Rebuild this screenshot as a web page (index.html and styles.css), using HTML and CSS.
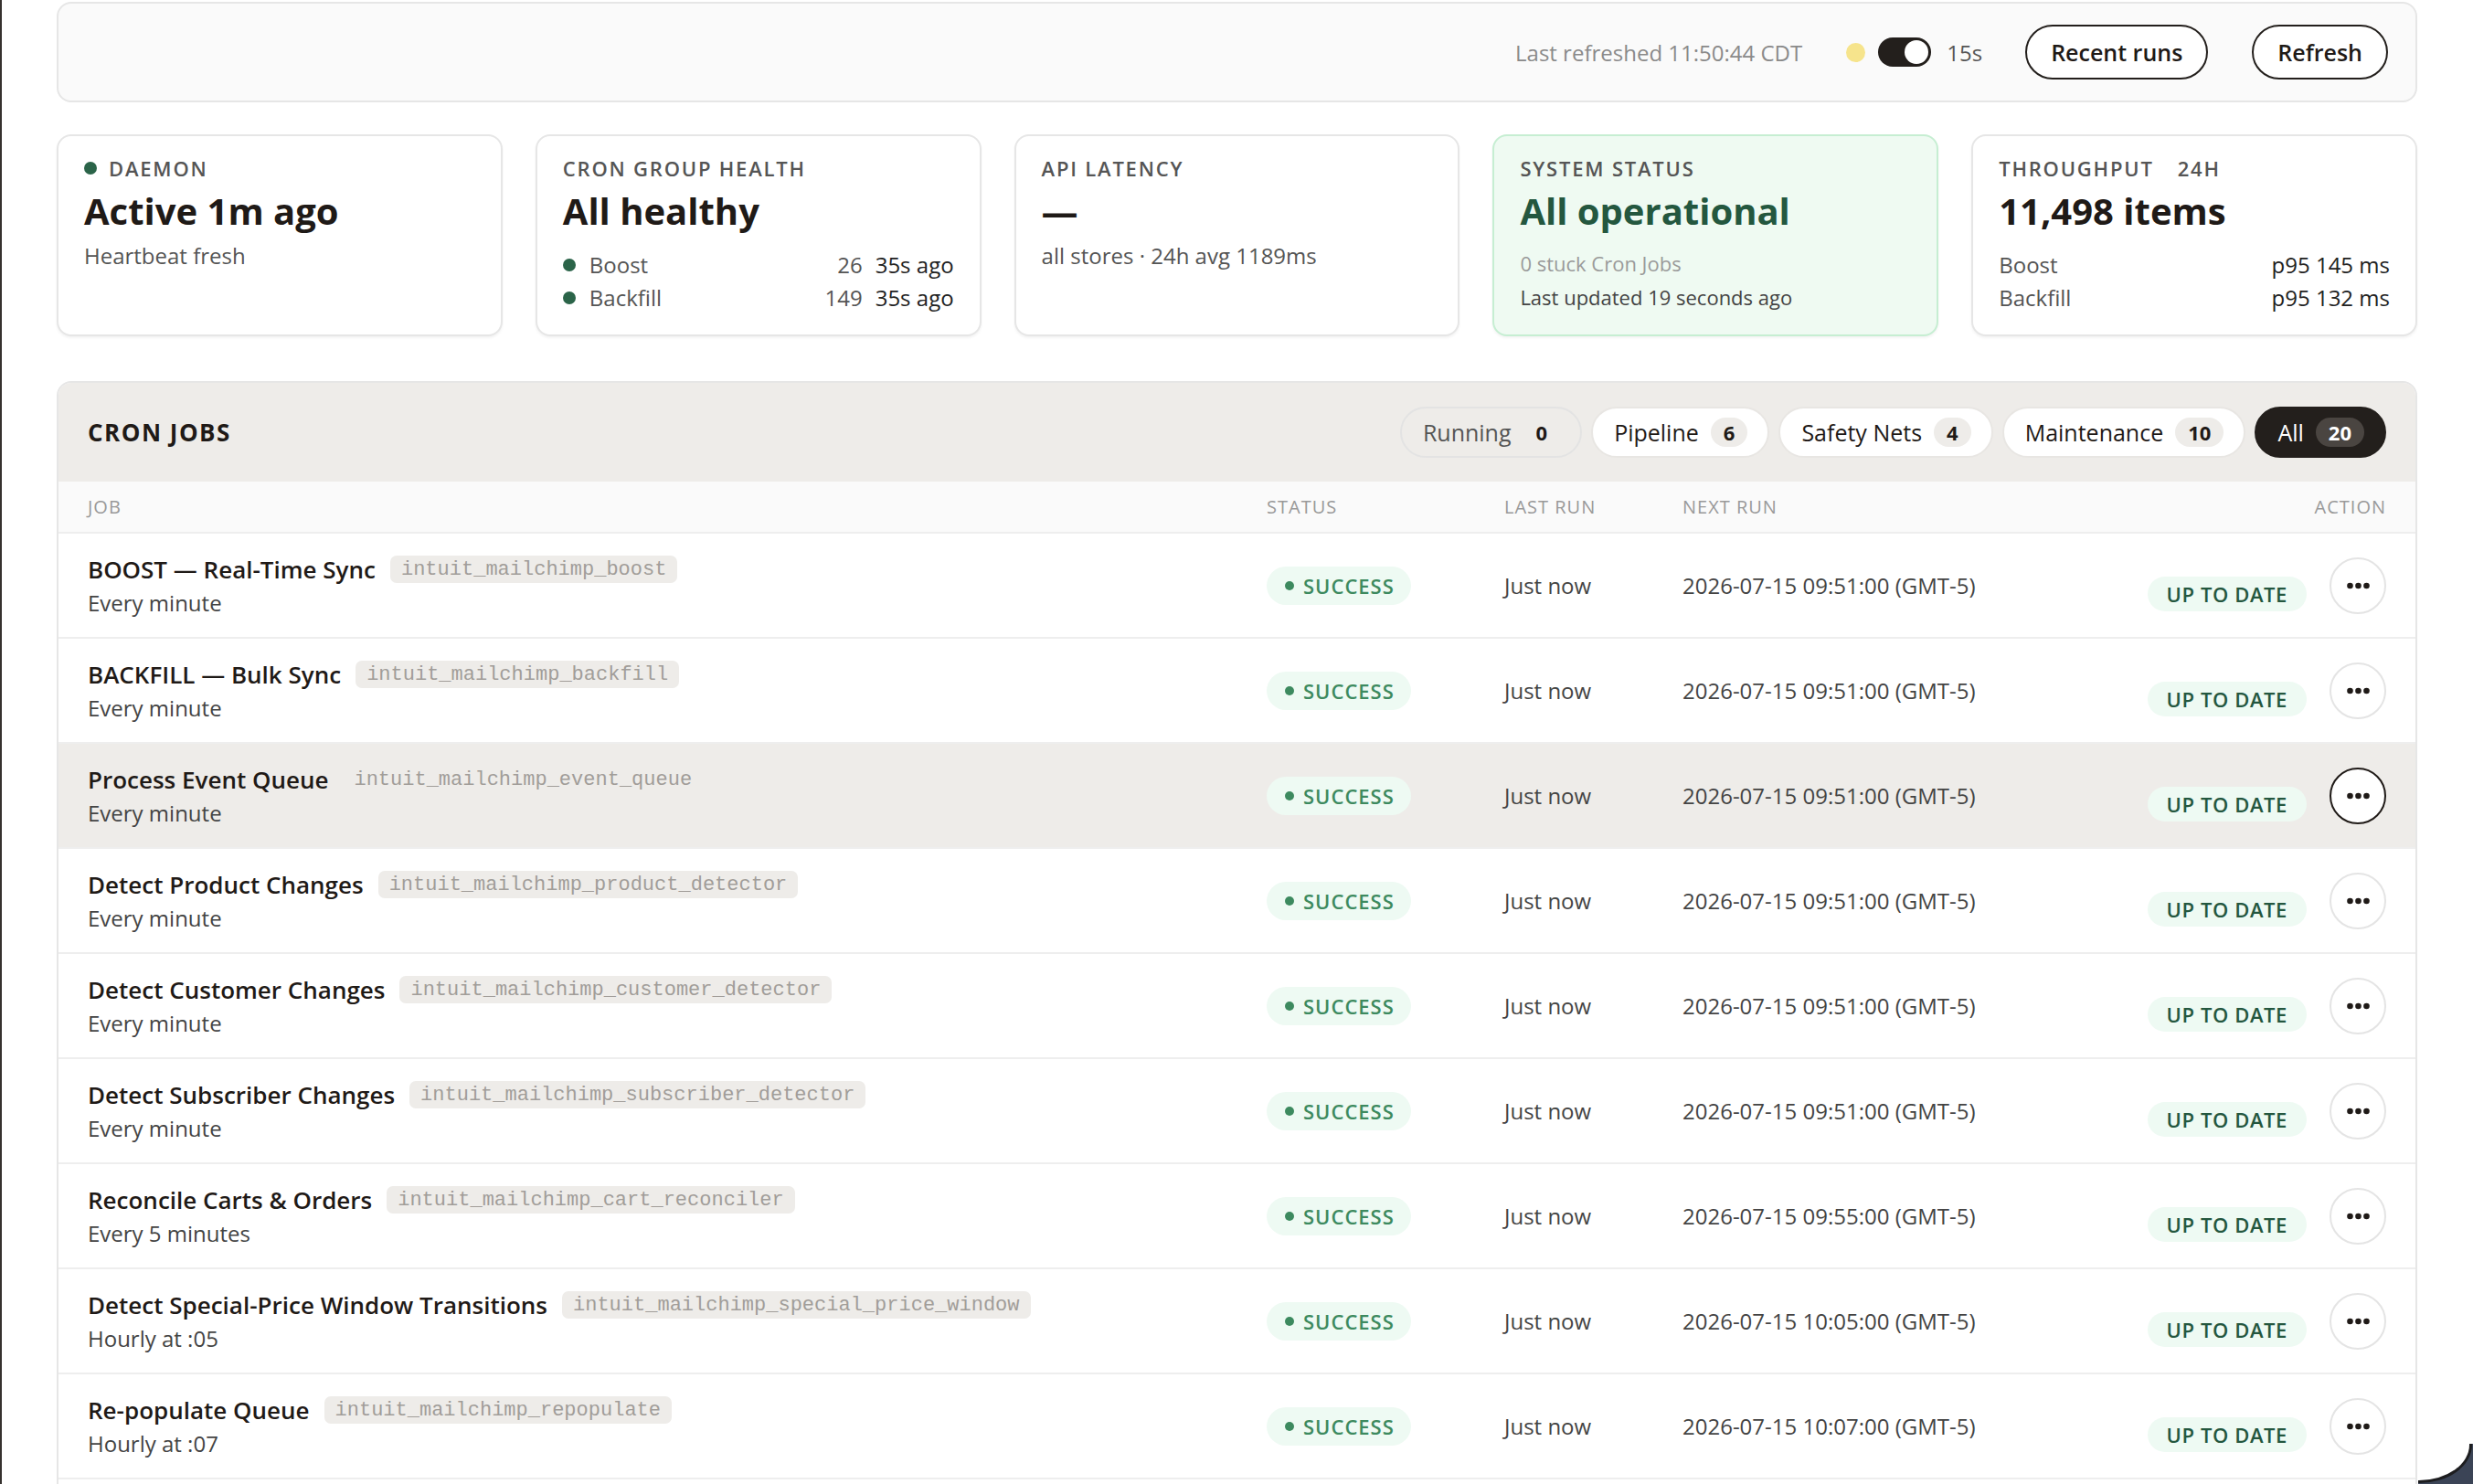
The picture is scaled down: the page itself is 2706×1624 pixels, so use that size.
FILE: index.html
```html
<!DOCTYPE html>
<html lang="en">
<head>
<meta charset="utf-8">
<title>Cron Jobs</title>
<link rel="stylesheet" href="styles.css">
</head>
<body>
<div class="page">
  <header class="topbar">
    <span class="refreshed">Last refreshed 11:50:44 CDT</span>
    <span class="live-dot"></span>
    <span class="toggle"><span class="knob"></span></span>
    <span class="interval">15s</span>
    <button class="btn btn-recent">Recent runs</button>
    <button class="btn">Refresh</button>
  </header>

  <section class="cards">
    <div class="card">
      <div class="label"><span class="dot"></span>DAEMON</div>
      <div class="value">Active 1m ago</div>
      <div class="sub">Heartbeat fresh</div>
    </div>
    <div class="card">
      <div class="label">CRON GROUP HEALTH</div>
      <div class="value">All healthy</div>
      <div class="list">
        <div class="list-row"><span class="dot"></span><span class="list-name">Boost</span><span class="num">26</span><span class="ago">35s ago</span></div>
        <div class="list-row"><span class="dot"></span><span class="list-name">Backfill</span><span class="num">149</span><span class="ago">35s ago</span></div>
      </div>
    </div>
    <div class="card">
      <div class="label">API LATENCY</div>
      <div class="value">—</div>
      <div class="sub">all stores · 24h avg 1189ms</div>
    </div>
    <div class="card card-ok">
      <div class="label">SYSTEM STATUS</div>
      <div class="value value-ok">All operational</div>
      <div class="list list-small">
        <div class="list-row small muted">0 stuck Cron Jobs</div>
        <div class="list-row small">Last updated 19 seconds ago</div>
      </div>
    </div>
    <div class="card">
      <div class="label">THROUGHPUT <span class="label-extra">24H</span></div>
      <div class="value">11,498 items</div>
      <div class="list">
        <div class="list-row"><span class="list-name plain">Boost</span><span class="ago">p95 145 ms</span></div>
        <div class="list-row"><span class="list-name plain">Backfill</span><span class="ago">p95 132 ms</span></div>
      </div>
    </div>
  </section>

  <section class="jobs">
    <div class="jobs-head">
      <h2 class="jobs-title">CRON JOBS</h2>
      <div class="filters">
        <span class="pill pill-ghost">Running <span class="count">0</span></span>
        <span class="pill">Pipeline <span class="count">6</span></span>
        <span class="pill">Safety Nets <span class="count">4</span></span>
        <span class="pill">Maintenance <span class="count">10</span></span>
        <span class="pill pill-active">All <span class="count">20</span></span>
      </div>
    </div>

    <div class="row row-head">
      <span>JOB</span><span>STATUS</span><span>LAST RUN</span><span>NEXT RUN</span><span class="th-action">ACTION</span>
    </div>

    <div class="row">
      <div class="job"><div class="job-top"><span class="job-name">BOOST — Real-Time Sync</span><code class="chip">intuit_mailchimp_boost</code></div><div class="job-sched">Every minute</div></div>
      <div><span class="status"><span class="sdot"></span>SUCCESS</span></div>
      <div class="cell">Just now</div>
      <div class="cell">2026-07-15 09:51:00 (GMT-5)</div>
      <div class="action"><span class="uptodate">UP TO DATE</span><button class="more"><svg width="25" height="8" viewBox="0 0 25 8"><circle cx="3.5" cy="4" r="3.3"/><circle cx="12.5" cy="4" r="3.3"/><circle cx="21.5" cy="4" r="3.3"/></svg></button></div>
    </div>

    <div class="row">
      <div class="job"><div class="job-top"><span class="job-name">BACKFILL — Bulk Sync</span><code class="chip">intuit_mailchimp_backfill</code></div><div class="job-sched">Every minute</div></div>
      <div><span class="status"><span class="sdot"></span>SUCCESS</span></div>
      <div class="cell">Just now</div>
      <div class="cell">2026-07-15 09:51:00 (GMT-5)</div>
      <div class="action"><span class="uptodate">UP TO DATE</span><button class="more"><svg width="25" height="8" viewBox="0 0 25 8"><circle cx="3.5" cy="4" r="3.3"/><circle cx="12.5" cy="4" r="3.3"/><circle cx="21.5" cy="4" r="3.3"/></svg></button></div>
    </div>

    <div class="row row-hover">
      <div class="job"><div class="job-top"><span class="job-name">Process Event Queue</span><code class="chip">intuit_mailchimp_event_queue</code></div><div class="job-sched">Every minute</div></div>
      <div><span class="status"><span class="sdot"></span>SUCCESS</span></div>
      <div class="cell">Just now</div>
      <div class="cell">2026-07-15 09:51:00 (GMT-5)</div>
      <div class="action"><span class="uptodate">UP TO DATE</span><button class="more"><svg width="25" height="8" viewBox="0 0 25 8"><circle cx="3.5" cy="4" r="3.3"/><circle cx="12.5" cy="4" r="3.3"/><circle cx="21.5" cy="4" r="3.3"/></svg></button></div>
    </div>

    <div class="row">
      <div class="job"><div class="job-top"><span class="job-name">Detect Product Changes</span><code class="chip">intuit_mailchimp_product_detector</code></div><div class="job-sched">Every minute</div></div>
      <div><span class="status"><span class="sdot"></span>SUCCESS</span></div>
      <div class="cell">Just now</div>
      <div class="cell">2026-07-15 09:51:00 (GMT-5)</div>
      <div class="action"><span class="uptodate">UP TO DATE</span><button class="more"><svg width="25" height="8" viewBox="0 0 25 8"><circle cx="3.5" cy="4" r="3.3"/><circle cx="12.5" cy="4" r="3.3"/><circle cx="21.5" cy="4" r="3.3"/></svg></button></div>
    </div>

    <div class="row">
      <div class="job"><div class="job-top"><span class="job-name">Detect Customer Changes</span><code class="chip">intuit_mailchimp_customer_detector</code></div><div class="job-sched">Every minute</div></div>
      <div><span class="status"><span class="sdot"></span>SUCCESS</span></div>
      <div class="cell">Just now</div>
      <div class="cell">2026-07-15 09:51:00 (GMT-5)</div>
      <div class="action"><span class="uptodate">UP TO DATE</span><button class="more"><svg width="25" height="8" viewBox="0 0 25 8"><circle cx="3.5" cy="4" r="3.3"/><circle cx="12.5" cy="4" r="3.3"/><circle cx="21.5" cy="4" r="3.3"/></svg></button></div>
    </div>

    <div class="row">
      <div class="job"><div class="job-top"><span class="job-name">Detect Subscriber Changes</span><code class="chip">intuit_mailchimp_subscriber_detector</code></div><div class="job-sched">Every minute</div></div>
      <div><span class="status"><span class="sdot"></span>SUCCESS</span></div>
      <div class="cell">Just now</div>
      <div class="cell">2026-07-15 09:51:00 (GMT-5)</div>
      <div class="action"><span class="uptodate">UP TO DATE</span><button class="more"><svg width="25" height="8" viewBox="0 0 25 8"><circle cx="3.5" cy="4" r="3.3"/><circle cx="12.5" cy="4" r="3.3"/><circle cx="21.5" cy="4" r="3.3"/></svg></button></div>
    </div>

    <div class="row">
      <div class="job"><div class="job-top"><span class="job-name">Reconcile Carts &amp; Orders</span><code class="chip">intuit_mailchimp_cart_reconciler</code></div><div class="job-sched">Every 5 minutes</div></div>
      <div><span class="status"><span class="sdot"></span>SUCCESS</span></div>
      <div class="cell">Just now</div>
      <div class="cell">2026-07-15 09:55:00 (GMT-5)</div>
      <div class="action"><span class="uptodate">UP TO DATE</span><button class="more"><svg width="25" height="8" viewBox="0 0 25 8"><circle cx="3.5" cy="4" r="3.3"/><circle cx="12.5" cy="4" r="3.3"/><circle cx="21.5" cy="4" r="3.3"/></svg></button></div>
    </div>

    <div class="row">
      <div class="job"><div class="job-top"><span class="job-name">Detect Special-Price Window Transitions</span><code class="chip">intuit_mailchimp_special_price_window</code></div><div class="job-sched">Hourly at :05</div></div>
      <div><span class="status"><span class="sdot"></span>SUCCESS</span></div>
      <div class="cell">Just now</div>
      <div class="cell">2026-07-15 10:05:00 (GMT-5)</div>
      <div class="action"><span class="uptodate">UP TO DATE</span><button class="more"><svg width="25" height="8" viewBox="0 0 25 8"><circle cx="3.5" cy="4" r="3.3"/><circle cx="12.5" cy="4" r="3.3"/><circle cx="21.5" cy="4" r="3.3"/></svg></button></div>
    </div>

    <div class="row">
      <div class="job"><div class="job-top"><span class="job-name">Re-populate Queue</span><code class="chip">intuit_mailchimp_repopulate</code></div><div class="job-sched">Hourly at :07</div></div>
      <div><span class="status"><span class="sdot"></span>SUCCESS</span></div>
      <div class="cell">Just now</div>
      <div class="cell">2026-07-15 10:07:00 (GMT-5)</div>
      <div class="action"><span class="uptodate">UP TO DATE</span><button class="more"><svg width="25" height="8" viewBox="0 0 25 8"><circle cx="3.5" cy="4" r="3.3"/><circle cx="12.5" cy="4" r="3.3"/><circle cx="21.5" cy="4" r="3.3"/></svg></button></div>
    </div>

    <div class="row row-tail"></div>
  </section>
</div>
<div class="corner"></div>
</body>
</html>
```

FILE: styles.css
```css
html, body {
  margin: 0;
  height: 100%;
  overflow: hidden;
}
body {
  background: #ffffff;
  border-left: 2px solid #36312e;
  box-sizing: border-box;
  font-family: "Open Sans", "Noto Sans", "Liberation Sans", sans-serif;
  color: #1f1a17;
}
.page {
  padding: 2px 61px 0 60px;
}

/* ---------- top bar ---------- */
.topbar {
  height: 110px;
  box-sizing: border-box;
  background: #fafafa;
  border: 2px solid #e6e6e6;
  border-radius: 16px;
  display: flex;
  align-items: center;
  justify-content: flex-end;
  padding: 0 30px;
}
.refreshed {
  font-size: 24px;
  color: #8a8a8a;
}
.live-dot {
  width: 21px;
  height: 21px;
  border-radius: 50%;
  background: #f6e48c;
  margin-left: 48px;
}
.toggle {
  width: 58px;
  height: 32px;
  border-radius: 16px;
  background: #231f1c;
  margin-left: 14px;
  display: flex;
  align-items: center;
  justify-content: flex-end;
  padding: 0 3px;
  box-sizing: border-box;
}
.knob {
  width: 26px;
  height: 26px;
  border-radius: 50%;
  background: #ffffff;
}
.interval {
  font-size: 24px;
  color: #555555;
  margin-left: 17px;
}
.btn {
  height: 60px;
  padding: 0 26px;
  border: 2px solid #231f1c;
  border-radius: 30px;
  background: #ffffff;
  font-family: inherit;
  font-size: 25px;
  font-weight: 600;
  color: #1f1a17;
  margin-left: 48px;
}
.btn-recent { margin-left: 47px; }

/* ---------- cards ---------- */
.cards {
  display: grid;
  grid-template-columns: repeat(5, 1fr);
  gap: 36px;
  margin-top: 35px;
}
.card {
  min-height: 221px;
  box-sizing: border-box;
  border: 2px solid #e6e6e6;
  border-radius: 16px;
  background: #ffffff;
  box-shadow: 0 2px 3px rgba(0, 0, 0, 0.05);
  padding: 20px 28px 20px 28px;
}
.card-ok {
  background: #effaf2;
  border-color: #c6eed2;
}
.label {
  font-size: 22px;
  line-height: 30px;
  font-weight: 600;
  letter-spacing: 1.8px;
  color: #555555;
  display: flex;
  align-items: center;
}
.label-extra {
  margin-left: 26px;
}
.dot {
  width: 14px;
  height: 14px;
  border-radius: 50%;
  background: #2b6449;
  display: inline-block;
  flex: none;
}
.label .dot { margin-right: 13px; }
.value {
  font-size: 40px;
  line-height: 48px;
  font-weight: 700;
  color: #1f1a17;
  margin-top: 8px;
}
.value-ok { color: #24573f; }
.sub {
  font-size: 24px;
  line-height: 32px;
  color: #555555;
  margin-top: 9px;
}
.list {
  margin-top: 17px;
}
.list-small {
  margin-top: 15px;
}
.list-row {
  display: flex;
  align-items: center;
  font-size: 24px;
  line-height: 36px;
  color: #1f1a17;
}
.list-row .dot { margin-right: 15px; }
.list-name {
  flex: 1;
  color: #555555;
}
.list-name.plain { color: #555555; }
.num {
  color: #555555;
  margin-right: 14px;
}
.ago { color: #222222; }
.list-row.small {
  font-size: 22px;
  line-height: 37px;
  color: #444444;
}
.list-row.small.muted { color: #9a9a9a; }

/* ---------- jobs table ---------- */
.jobs {
  margin-top: 49px;
  border: 2px solid #e6e6e6;
  border-radius: 16px;
  overflow: hidden;
  background: #ffffff;
}
.jobs-head {
  height: 108px;
  background: #eeece9;
  display: flex;
  align-items: center;
  justify-content: space-between;
  padding: 0 32px;
}
.jobs-title {
  margin: 0;
  font-size: 26px;
  font-weight: 700;
  letter-spacing: 1.5px;
  color: #1f1a17;
}
.filters {
  display: flex;
  gap: 10px;
}
.pill {
  height: 56px;
  box-sizing: border-box;
  border: 2px solid #e8e6e3;
  border-radius: 28px;
  background: #ffffff;
  display: inline-flex;
  align-items: center;
  padding: 0 22px 0 23px;
  font-size: 25px;
  font-weight: 500;
  color: #1f1a17;
}
.count {
  min-width: 38px;
  height: 32px;
  box-sizing: border-box;
  padding: 0 14px;
  border-radius: 16px;
  background: #eeece9;
  margin-left: 13px;
  font-size: 22px;
  font-weight: 700;
  display: inline-flex;
  align-items: center;
  justify-content: center;
}
.pill-ghost {
  background: #eeece9;
  border-color: #e3e3e3;
  color: #555555;
}
.pill-ghost .count { color: #1f1a17; }
.pill-active {
  background: #231f1c;
  border-color: #231f1c;
  color: #ffffff;
  padding: 0 22px 0 23px;
}
.pill-active .count {
  background: #4a4541;
  color: #ffffff;
}

.row {
  display: grid;
  grid-template-columns: 1290px 260px 195px 1fr auto;
  align-items: center;
  padding: 0 32px;
  border-bottom: 2px solid #eeeeee;
}
.row-head {
  height: 57px;
  box-sizing: border-box;
  background: #fafafa;
  font-size: 20px;
  font-weight: 500;
  letter-spacing: 1px;
  color: #999999;
}
.row-tail { height: 113px; }
.th-action { text-align: right; }
.row-hover { background: #eeece9; }

.job {
  padding: 21px 0 20px;
}
.job-top {
  display: flex;
  align-items: center;
  height: 36px;
}
.job-name {
  font-size: 26px;
  font-weight: 600;
  color: #1f1a17;
  white-space: nowrap;
}
.chip {
  margin-left: 16px;
  height: 30px;
  display: inline-flex;
  align-items: center;
  padding: 0 12px;
  border-radius: 7px;
  background: #eeece9;
  font-family: "Liberation Mono", "Courier New", monospace;
  font-size: 22px;
  color: #a19d99;
}
.job-sched {
  margin-top: 2px;
  font-size: 24px;
  line-height: 34px;
  color: #444444;
}
.status {
  display: inline-flex;
  align-items: center;
  height: 42px;
  padding: 0 18px 0 20px;
  border-radius: 21px;
  background: #eefaf3;
  color: #3d8a5f;
  font-size: 22px;
  font-weight: 600;
  letter-spacing: 1px;
}
.sdot {
  width: 10px;
  height: 10px;
  border-radius: 50%;
  background: #3d8a5f;
  margin-right: 10px;
}
.cell {
  font-size: 24px;
  color: #444444;
}
.action {
  display: flex;
  align-items: center;
  gap: 25px;
}
.uptodate {
  margin-top: 18px;
  height: 38px;
  display: inline-flex;
  align-items: center;
  padding: 0 21px;
  border-radius: 19px;
  background: #eefaf3;
  color: #24573f;
  font-size: 22px;
  font-weight: 600;
  letter-spacing: 0.6px;
}
.more {
  width: 62px;
  height: 62px;
  border-radius: 50%;
  border: 2px solid #e4e4e4;
  background: #ffffff;
  display: flex;
  align-items: center;
  justify-content: center;
  padding: 0;
}
.more svg { fill: #1f1a17; display: block; }
.row-hover .more { border-color: #1f1a17; }

/* window corner of the captured screen */
.corner {
  position: fixed;
  right: 0;
  bottom: 0;
  width: 60px;
  height: 44px;
  background: #3b4456;
}
.corner::before {
  content: "";
  position: absolute;
  left: 0;
  top: 0;
  right: 1px;
  bottom: 1px;
  background: #ffffff;
  border-right: 3px solid #1d1d1f;
  border-bottom: 3px solid #1d1d1f;
  border-bottom-right-radius: 58px 42px;
}
```
